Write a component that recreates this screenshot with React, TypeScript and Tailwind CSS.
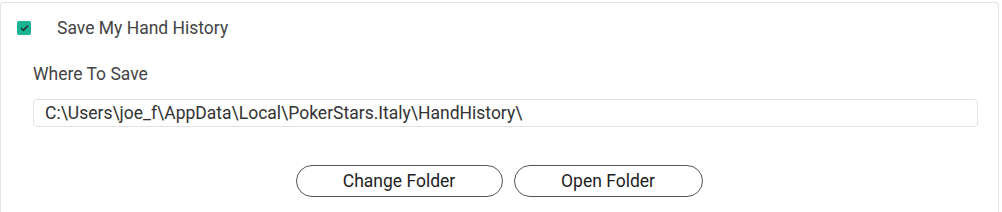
import React, { useState } from 'react';

const App: React.FC = () => {
  const [save, setSave] = useState(true);
  const [path] = useState('C:\\Users\\joe_f\\AppData\\Local\\PokerStars.Italy\\HandHistory\\');

  return (
    <div className="w-[1002px] h-[212px] bg-white pt-[2px] font-['Roboto',sans-serif]">
      <div className="w-[999px] h-[210px] border border-b-0 border-[#e2e2e2] rounded-t-[4px] pl-4 pr-5">
        {/* checkbox row */}
        <label className="flex items-center h-[14px] mt-[18px] cursor-pointer">
          <span
            onClick={() => setSave(!save)}
            className="w-[14px] h-[14px] rounded-[2px] bg-[#1bb394] flex items-center justify-center"
          >
            {save && (
              <svg width="9" height="8" viewBox="0 0 9 8">
                <path d="M1 4.2 L3.4 6.4 L8 1.6" fill="none" stroke="#1d3b34" strokeWidth="1.6" />
              </svg>
            )}
          </span>
          <span className="ml-[26px] text-[17.5px] text-[#444]">Save My Hand History</span>
        </label>

        <div className="pl-4 mt-[29px]">
          <div className="text-[17.5px] leading-[20px] text-[#444]">Where To Save</div>
          <div className="mt-[15px] h-[28px] border border-[#e2e2e2] rounded-[4px] flex items-center px-[11px] text-[17.5px] text-[#333]">
            {path}
          </div>
        </div>

        <div className="flex justify-center gap-[11px] mt-[38px] pl-[3px]">
          <button className="w-[207px] h-[32px] rounded-full border border-[#555] text-[17.5px] text-[#222]">
            Change Folder
          </button>
          <button className="w-[189px] h-[32px] rounded-full border border-[#555] text-[17.5px] text-[#222]">
            Open Folder
          </button>
        </div>
      </div>
    </div>
  );
};

export default App;
